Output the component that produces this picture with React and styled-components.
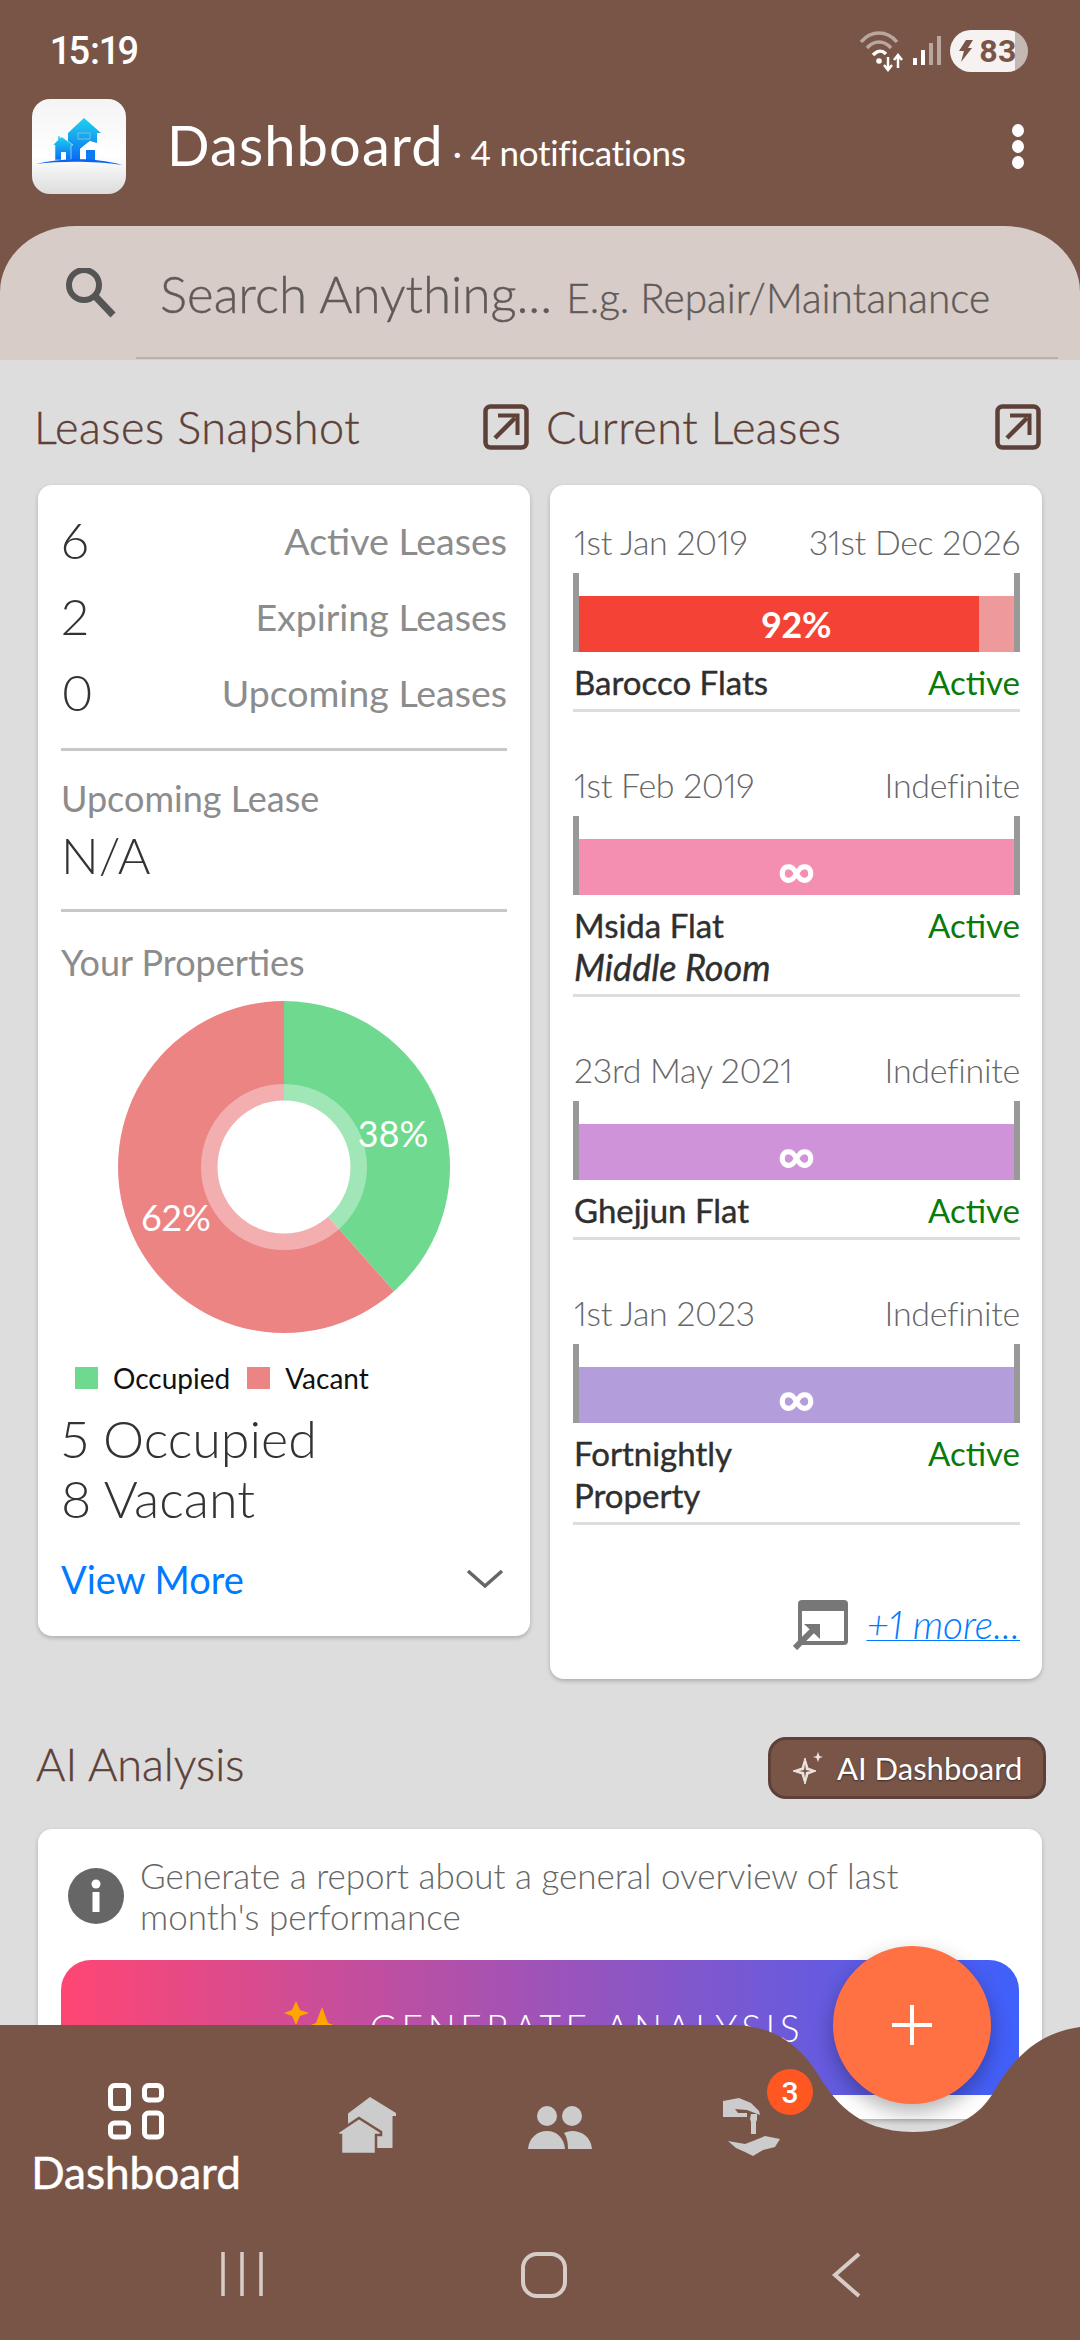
import styled, { createGlobalStyle } from "styled-components";

const GlobalStyle = createGlobalStyle`
	html, body {
		margin: 0;
		padding: 0;
		background: #dddddd;
	}
	* {
		box-sizing: border-box;
	}
`;

const FONT = `"Lato", "Liberation Sans", sans-serif`;
const BROWN = "#795548";

const Screen = styled.div`
	width: 1080px;
	height: 2340px;
	position: relative;
	overflow: hidden;
	background: #dddddd;
	font-family: ${FONT};
	font-weight: 300;
	font-variant-numeric: proportional-nums;
`;

const TopBar = styled.div`
	background: ${BROWN};
	height: 226px;
`;

const StatusRow = styled.div`
	height: 99px;
	padding: 3px 52px 0 51px;
	display: flex;
	justify-content: space-between;
	align-items: center;
`;

const Time = styled.div`
	font-family: Roboto, sans-serif;
	font-size: 38px;
	font-weight: 500;
	color: #fff;
`;

const StatusIcons = styled.div`
	display: flex;
	align-items: center;
	gap: 8px;
`;

const Battery = styled.div`
	width: 78px;
	height: 42px;
	border-radius: 21px;
	background: linear-gradient(to right, #f5f2f1 83%, #c5b8b2 83%);
	display: flex;
	align-items: center;
	gap: 6px;
	padding-left: 8px;
	color: ${BROWN};
	font-family: Roboto, sans-serif;
	font-size: 32px;
	font-weight: 700;
`;

const AppRow = styled.div`
	display: flex;
	align-items: center;
	height: 95px;
	padding: 0 56px 0 32px;
`;

const AppTitle = styled.div`
	flex: 1;
	margin-left: 41px;
	display: flex;
	align-items: baseline;
	color: #fff;
	padding-bottom: 4px;
`;

const AppName = styled.span`
	font-size: 56px;
	font-weight: 400;
	letter-spacing: 1.1px;
`;

const AppSub = styled.span`
	font-size: 35px;
	margin-left: 9px;
	font-weight: 400;
	letter-spacing: -0.3px;
`;

const Dots = styled.div`
	display: flex;
	flex-direction: column;
	gap: 3px;
	span {
		width: 12px;
		height: 13px;
		border-radius: 50%;
		background: #fff;
	}
`;

const SearchWrap = styled.div`
	background: ${BROWN};
`;

const SearchBox = styled.div`
	height: 134px;
	background: #d7ccc8;
	border-radius: 76px 76px 0 0 / 66px 66px 0 0;
	display: flex;
	align-items: center;
	padding-left: 64px;
	position: relative;
	&::after {
		content: "";
		position: absolute;
		left: 136px;
		right: 22px;
		bottom: 1px;
		height: 2px;
		background: #bcaea9;
	}
`;

const SearchText = styled.div`
	margin-left: 44px;
	display: flex;
	align-items: baseline;
	color: #5f5a58;
	-webkit-text-stroke: 0.4px #5f5a58;
`;

const SearchMain = styled.span`
	font-size: 51px;
`;

const SearchHint = styled.span`
	font-size: 40.5px;
	margin-left: 14px;
`;

const Columns = styled.div`
	display: grid;
	grid-template-columns: 492px 492px;
	gap: 20px;
	padding: 0 38px;
	align-items: start;
`;

const ColumnHead = styled.div`
	height: 125px;
	display: flex;
	align-items: center;
	justify-content: space-between;
	margin-left: -4px;
	padding: 8px 1px 0 0;
`;

const SectionTitle = styled.div`
	font-size: 45px;
	color: #5d4037;
	font-weight: 300;
	letter-spacing: 0.5px;
	-webkit-text-stroke: 0.4px #5d4037;
`;

const AiTitle = styled(SectionTitle)`
	padding-bottom: 9px;
	letter-spacing: 0;
`;

const Card = styled.div`
	background: #fff;
	border-radius: 14px;
	box-shadow: 0 2px 4px rgba(0, 0, 0, 0.22);
	padding: ${(props) => props.$pad};
`;

const StatRow = styled.div`
	height: 76px;
	display: flex;
	align-items: center;
	justify-content: space-between;
`;

const StatNum = styled.div`
	font-size: 50px;
	color: #333;
`;

const StatLabel = styled.div`
	font-size: 37.5px;
	color: #8c8c8c;
	font-weight: 400;
`;

const Divider = styled.div`
	height: 3px;
	background: #c8c8c8;
	margin-top: ${(props) => props.$top}px;
`;

const FieldLabel = styled.div`
	font-size: 36px;
	line-height: 50px;
	color: #8c8c8c;
	font-weight: 400;
	margin-top: ${(props) => props.$top}px;
`;

const FieldValue = styled.div`
	font-size: 50px;
	line-height: 64px;
	color: #333;
`;

const DonutBox = styled.div`
	display: flex;
	justify-content: center;
	margin-top: 14px;
`;

const DonutLabel = styled.text`
	font-family: ${FONT};
	font-size: 36px;
	font-weight: 400;
	fill: #fff;
	text-anchor: middle;
	dominant-baseline: central;
`;

const Legend = styled.div`
	display: flex;
	align-items: center;
	height: 30px;
	margin-top: 30px;
	padding-left: 14px;
`;

const Swatch = styled.span`
	width: 23px;
	height: 22px;
	background: ${(props) => props.$color};
	margin-right: 15px;
`;

const LegendText = styled.span`
	font-size: 28px;
	color: #111;
	font-weight: 400;
	margin-right: 17px;
`;

const Counts = styled.div`
	margin-top: 15px;
	font-size: 52px;
	line-height: 60px;
	color: #333;
`;

const MoreRow = styled.div`
	margin-top: 26px;
	height: 50px;
	display: flex;
	align-items: center;
	justify-content: space-between;
	padding-right: 3px;
`;

const MoreLink = styled.span`
	font-size: 38px;
	color: #007aff;
	font-weight: 400;
`;

const Lease = styled.div`
	margin-bottom: 47px;
`;

const LeaseDates = styled.div`
	height: 50px;
	display: flex;
	align-items: center;
	justify-content: space-between;
	font-size: 34px;
	color: #666;
	padding-left: 1px;
	letter-spacing: -0.3px;
`;

const Track = styled.div`
	margin-top: 7px;
	height: 79px;
	border-left: 6px solid #999;
	border-right: 6px solid #999;
	display: flex;
	align-items: flex-end;
	position: relative;
`;

const TrackFill = styled.div`
	height: 56px;
	background: ${(props) => props.$color};
`;

const TrackRest = styled.div`
	height: 56px;
	flex: 1;
	background: #ef9a9a;
`;

const TrackText = styled.div`
	position: absolute;
	left: 0;
	right: 0;
	bottom: 0;
	height: 56px;
	line-height: ${(props) => (props.$infinite ? 60 : 56)}px;
	text-align: center;
	color: #fff;
	font-size: ${(props) => (props.$infinite ? 52 : 36)}px;
	font-weight: 700;
`;

const LeaseFoot = styled.div`
	margin-top: 9px;
	padding-bottom: 6px;
	border-bottom: 3px solid #ddd;
	display: flex;
	justify-content: space-between;
	align-items: flex-start;
	line-height: 42px;
`;

const LeaseName = styled.div`
	color: #2f2f2f;
	font-size: 33px;
	font-weight: 400;
	padding-left: 1px;
	-webkit-text-stroke: 0.4px #2f2f2f;
	i {
		display: block;
		font-size: 36px;
	}
`;

const LeaseStatus = styled.div`
	color: #0a7a0a;
	font-size: 33px;
	font-weight: 400;
`;

const MoreLeases = styled.div`
	margin-top: 74px;
	height: 50px;
	display: flex;
	align-items: center;
	justify-content: flex-end;
	gap: 17px;
`;

const MoreAnchor = styled.span`
	font-size: 39px;
	font-style: italic;
	color: #007aff;
	text-decoration: underline;
	text-decoration-thickness: 1px;
`;

const AiSection = styled.div`
	padding: 0 38px;
	margin-top: 58px;
`;

const AiHead = styled.div`
	height: 62px;
	display: flex;
	align-items: center;
	justify-content: space-between;
	margin: 0 -4px 30px -2px;
`;

const AiButton = styled.div`
	width: 278px;
	height: 62px;
	background: ${BROWN};
	border: 3px solid #5d4037;
	border-radius: 18px;
	display: flex;
	align-items: center;
	gap: 14px;
	padding-left: 22px;
	color: #fff;
	font-size: 31px;
	font-weight: 400;
	text-shadow: 0 1px 2px rgba(0, 0, 0, 0.5);
`;

const InfoRow = styled.div`
	display: flex;
	align-items: center;
	gap: 15px;
	padding-left: 6px;
`;

const InfoText = styled.div`
	font-size: 35px;
	line-height: 41px;
	color: #666;
	white-space: nowrap;
`;

const GenerateButton = styled.div`
	margin-top: 23px;
	height: 135px;
	border-radius: 30px;
	background: linear-gradient(to right, #ff4673, #3f60fb);
	display: flex;
	align-items: center;
	justify-content: center;
	gap: 26px;
	color: #fff;
	font-size: 37px;
	letter-spacing: 4.6px;
	padding-left: 8px;
`;

const Fab = styled.div`
	position: absolute;
	left: 833px;
	top: 1946px;
	width: 158px;
	height: 158px;
	border-radius: 50%;
	background: #ff7043;
	box-shadow: 0 8px 20px rgba(0, 0, 0, 0.3);
	display: flex;
	align-items: center;
	justify-content: center;
`;

const BottomBar = styled.div`
	position: absolute;
	left: 0;
	bottom: 0;
	width: 1080px;
	height: 315px;
	background: ${BROWN};
	clip-path: path("M0 0 H733 C768 0 797 16 817 48 C832 72 855 107 913 107 C955 107 980 90 993 68 C1010 38 1035 8 1080 2 V315 H0 Z");
`;

const Tabs = styled.div`
	display: flex;
	height: 227px;
	padding-top: 58px;
	align-items: flex-start;
`;

const Tab = styled.div`
	width: ${(props) => (props.$active ? 272 : 192)}px;
	display: flex;
	flex-direction: column;
	align-items: center;
	padding-top: ${(props) => props.$top || 0}px;
	position: relative;
`;

const TabLabel = styled.div`
	font-size: 44px;
	font-weight: 400;
	color: #fff;
	line-height: 50px;
	margin-top: 7px;
	-webkit-text-stroke: 0.5px #fff;
`;

const Badge = styled.div`
	position: absolute;
	left: 111px;
	top: -14px;
	width: 46px;
	height: 46px;
	border-radius: 50%;
	background: #ff5722;
	color: #fff;
	font-family: Roboto, sans-serif;
	font-size: 30px;
	font-weight: 500;
	display: flex;
	align-items: center;
	justify-content: center;
`;

const SystemKeys = styled.div`
	display: grid;
	grid-template-columns: repeat(3, 302px);
	justify-content: center;
	justify-items: center;
	padding-left: 8px;
	svg {
		display: block;
	}
`;

const leases = [
	{ start: "1st Jan 2019", end: "31st Dec 2026", color: "#f44336", pct: 92, name: "Barocco Flats" },
	{ start: "1st Feb 2019", end: "Indefinite", color: "#f48fb1", name: "Msida Flat", room: "Middle Room" },
	{ start: "23rd May 2021", end: "Indefinite", color: "#ce93d8", name: "Ghejjun Flat" },
	{ start: "1st Jan 2023", end: "Indefinite", color: "#b39ddb", name: "Fortnightly", name2: "Property" },
];

function slice(from, to, r) {
	const a = (from * Math.PI) / 180;
	const b = (to * Math.PI) / 180;
	const large = to - from > 180 ? 1 : 0;
	const x1 = r + r * Math.sin(a);
	const y1 = r - r * Math.cos(a);
	const x2 = r + r * Math.sin(b);
	const y2 = r - r * Math.cos(b);
	return `M${r} ${r} L${x1} ${y1} A${r} ${r} 0 ${large} 1 ${x2} ${y2} Z`;
}

function WifiIcon() {
	return (
		<svg width="44" height="46" viewBox="0 0 44 46" fill="none">
			<path d="M1 14 C11 2 27 2 37 14" stroke="#b9a79f" strokeWidth="3.5" />
			<path d="M7 20 C14 12 24 12 31 20" stroke="#b9a79f" strokeWidth="3.5" />
			<path d="M13 27 C18 22 22 22 26 26" stroke="#fff" strokeWidth="3.5" />
			<circle cx="19" cy="33" r="2.8" fill="#fff" />
			<path d="M28 29 V41 M24 37 L28 42 L32 37" stroke="#fff" strokeWidth="2.5" />
			<path d="M38 40 V28 M34 32 L38 27 L42 32" stroke="#fff" strokeWidth="2.5" />
		</svg>
	);
}

function SignalIcon() {
	return (
		<svg width="30" height="30" viewBox="0 0 30 30">
			<rect x="1" y="22" width="4" height="7" fill="#fff" />
			<rect x="9" y="14" width="4" height="15" fill="#fff" />
			<rect x="17" y="7" width="4" height="22" fill="#b9a79f" />
			<rect x="25" y="0" width="4" height="29" fill="#b9a79f" />
		</svg>
	);
}

function Logo() {
	return (
		<svg width="94" height="95" viewBox="0 0 94 95">
			<defs>
				<linearGradient id="tile" x1="0" y1="0" x2="0" y2="1">
					<stop offset="0" stopColor="#f4f4f4" />
					<stop offset="0.6" stopColor="#ffffff" />
					<stop offset="1" stopColor="#dcdcdc" />
				</linearGradient>
				<linearGradient id="house" x1="0" y1="0" x2="0" y2="1">
					<stop offset="0" stopColor="#1fd4ee" />
					<stop offset="1" stopColor="#0a6cf2" />
				</linearGradient>
			</defs>
			<rect width="94" height="95" rx="18" fill="url(#tile)" />
			<path d="M52 19 L69 34 H65 V44 L58 42 L48 50 V61 H36 V41 L36 34 Z" fill="url(#house)" />
			<path d="M30 38 L41 46 H39 V61 H23 V46 H21 L26 41 V37 H28 V39 Z" fill="url(#house)" stroke="#d8eefb" strokeWidth="0.6" />
			<path d="M58 42 L73 52 L72 54 L68 51 V61 H50 V50 H48 Z" fill="#fff" />
			<rect x="54" y="51" width="9" height="10" fill="#0a7cf4" />
			<rect x="29" y="53" width="5" height="8" fill="#fff" />
			<rect x="46" y="34" width="12" height="6" fill="none" stroke="#6cb8e8" strokeWidth="1.2" />
			<path d="M4 65 C28 59 64 58 90 66 C64 62 28 62 4 65 Z" fill="#0a62ee" />
		</svg>
	);
}

function SearchIcon() {
	return (
		<svg width="52" height="50" viewBox="0 0 52 50" fill="none" stroke="#555" strokeWidth="6">
			<circle cx="20" cy="17" r="15" />
			<path d="M31 28 L49 47" strokeWidth="7" />
		</svg>
	);
}

function OpenIcon() {
	return (
		<svg width="46" height="46" viewBox="0 0 46 46" fill="none" stroke="#5d4037">
			<rect x="2.5" y="2.5" width="41" height="41" rx="5" strokeWidth="4.5" />
			<path d="M12 34 L32 14" strokeWidth="4.5" />
			<path d="M15 11.5 H34.5 V31" strokeWidth="4" />
		</svg>
	);
}

function Chevron() {
	return (
		<svg width="38" height="22" viewBox="0 0 38 22" fill="none" stroke="#666" strokeWidth="3.5">
			<path d="M2 3 L19 18 L36 3" />
		</svg>
	);
}

function WindowIcon() {
	return (
		<svg width="56" height="52" viewBox="0 0 56 52" fill="none">
			<rect x="5" y="2" width="50" height="45" rx="4" fill="#777" />
			<rect x="9" y="13" width="42" height="30" fill="#fff" />
			<path d="M2 50 L22 30" stroke="#777" strokeWidth="6" />
			<path d="M11 26 H27 V41 Z" fill="#777" />
		</svg>
	);
}

function Sparkle() {
	return (
		<svg width="30" height="32" viewBox="0 0 30 32" fill="#ece3df">
			<path d="M12 6 L15 16 L23 19 L15 22 L12 32 L9 22 L0 19 L9 16 Z" stroke="#ece3df" />
			<path d="M12 12 L13 18 L18 19 L13 20 L12 26 L11 20 L6 19 L11 18 Z" fill={BROWN} />
			<path d="M25 0 L26.5 4 L30 5 L26.5 6 L25 10 L23.5 6 L20 5 L23.5 4 Z" />
		</svg>
	);
}

function InfoIcon() {
	return (
		<svg width="58" height="58" viewBox="0 0 58 58">
			<circle cx="29" cy="29" r="28" fill="#666" />
			<circle cx="29" cy="17" r="4.5" fill="#fff" />
			<rect x="25.5" y="25" width="7" height="20" fill="#fff" />
		</svg>
	);
}

function GoldStars() {
	return (
		<svg width="60" height="60" viewBox="0 0 60 60" fill="#ffa500">
			<path d="M12 3 L16 12 L25 15 L16 18 L12 27 L8 18 L0 15 L8 12 Z" />
			<path d="M38 9 L44 25 L60 31 L44 37 L38 53 L32 37 L16 31 L32 25 Z" />
		</svg>
	);
}

function DashboardIcon() {
	return (
		<svg width="56" height="57" viewBox="0 0 56 57" fill="none" stroke="#fff" strokeWidth="5">
			<rect x="2.5" y="2.5" width="18" height="23" rx="4" />
			<rect x="2.5" y="40" width="18" height="14" rx="4" />
			<rect x="36.5" y="2.5" width="17" height="14.5" rx="4" />
			<rect x="36.5" y="30" width="17" height="24" rx="4" />
		</svg>
	);
}

function HousesIcon() {
	return (
		<svg width="60" height="58" viewBox="0 0 60 58">
			<path d="M32 0 L58 16 V19 H54.5 V51 H10 V16.5 Z" fill="#ccc" />
			<path d="M21 21 L43 35 V38 H38 V57 H3 V38 H0 V35 Z" fill="#ccc" stroke={BROWN} strokeWidth="2.5" />
		</svg>
	);
}

function PeopleIcon() {
	return (
		<svg width="64" height="44" viewBox="0 0 64 44" fill="#ccc">
			<circle cx="19" cy="11" r="10" />
			<circle cx="44" cy="11" r="10" />
			<path d="M40 44 C50 44 58 44 64 44 C63 32 54 26 44 26 C41 26 38 27 36 28 C39 32 40 38 40 44 Z" />
			<path d="M0 44 C1 33 9 26 19 26 C29 26 36 33 37 44 Z" />
		</svg>
	);
}

function HandIcon() {
	return (
		<svg width="58" height="58" viewBox="0 0 58 58" fill="#ccc">
			<path d="M0 3 L16 0 L28 5 L36 13 L37 17 L24 12 L12 11 L15 15 L24 15 L24 19 L0 19 Z" />
			<path d="M28 16 H34 V22 L33 24 V36 H28 V24 L27 21 Z" />
			<path d="M5 43 L22 46 L30 43 L42 38 L57 41 L52 49 L40 52 L30 58 L22 54 L13 50 Z" />
		</svg>
	);
}

function App() {
	const occupiedDeg = (5 / 13) * 360;
	return (
		<Screen>
			<GlobalStyle />
			<TopBar>
				<StatusRow>
					<Time>15:19</Time>
					<StatusIcons>
						<WifiIcon />
						<SignalIcon />
						<Battery>
							<svg width="15" height="22" viewBox="0 0 15 22" fill={BROWN}>
								<path d="M8 0 H15 L10 8 H14 L3 22 L6 11 H1 Z" />
							</svg>
							<span>83</span>
						</Battery>
					</StatusIcons>
				</StatusRow>
				<AppRow>
					<Logo />
					<AppTitle>
						<AppName>Dashboard</AppName>
						<AppSub>· 4 notifications</AppSub>
					</AppTitle>
					<Dots>
						<span />
						<span />
						<span />
					</Dots>
				</AppRow>
			</TopBar>
			<SearchWrap>
				<SearchBox>
					<SearchIcon />
					<SearchText>
						<SearchMain>Search Anything...</SearchMain>
						<SearchHint>E.g. Repair/Maintanance</SearchHint>
					</SearchText>
				</SearchBox>
			</SearchWrap>

			<Columns>
				<div>
					<ColumnHead>
						<SectionTitle>Leases Snapshot</SectionTitle>
						<OpenIcon />
					</ColumnHead>
					<Card $pad="17px 23px 32px">
						<StatRow>
							<StatNum>6</StatNum>
							<StatLabel>Active Leases</StatLabel>
						</StatRow>
						<StatRow>
							<StatNum>2</StatNum>
							<StatLabel>Expiring Leases</StatLabel>
						</StatRow>
						<StatRow>
							<StatNum>0</StatNum>
							<StatLabel>Upcoming Leases</StatLabel>
						</StatRow>
						<Divider $top={18} />
						<FieldLabel $top={22}>Upcoming Lease</FieldLabel>
						<FieldValue>N/A</FieldValue>
						<Divider $top={22} />
						<FieldLabel $top={25}>Your Properties</FieldLabel>
						<DonutBox>
							<svg width="332" height="332" viewBox="0 0 332 332">
								<path d={slice(0, occupiedDeg, 166)} fill="#6fd98f" />
								<path d={slice(occupiedDeg, 360, 166)} fill="#ed8484" />
								<circle cx="166" cy="166" r="83" fill="rgba(255,255,255,0.35)" />
								<circle cx="166" cy="166" r="66.5" fill="#fff" />
								<DonutLabel x="275" y="132">38%</DonutLabel>
								<DonutLabel x="58" y="216">62%</DonutLabel>
							</svg>
						</DonutBox>
						<Legend>
							<Swatch $color="#6fd98f" />
							<LegendText>Occupied</LegendText>
							<Swatch $color="#ed8484" />
							<LegendText>Vacant</LegendText>
						</Legend>
						<Counts>
							5 Occupied
							<br />8 Vacant
						</Counts>
						<MoreRow>
							<MoreLink>View More</MoreLink>
							<Chevron />
						</MoreRow>
					</Card>
				</div>

				<div>
					<ColumnHead>
						<SectionTitle>Current Leases</SectionTitle>
						<OpenIcon />
					</ColumnHead>
					<Card $pad="31px 22px 30px 23px">
						{leases.map((l) => (
							<Lease key={l.start}>
								<LeaseDates>
									<span>{l.start}</span>
									<span>{l.end}</span>
								</LeaseDates>
								<Track>
									<TrackFill $color={l.color} style={{ width: `${l.pct || 100}%` }} />
									{l.pct && <TrackRest />}
									<TrackText $infinite={!l.pct}>{l.pct ? `${l.pct}%` : "∞"}</TrackText>
								</Track>
								<LeaseFoot>
									<LeaseName>
										{l.name}
										{l.room && <i>{l.room}</i>}
										{l.name2 && <div>{l.name2}</div>}
									</LeaseName>
									<LeaseStatus>Active</LeaseStatus>
								</LeaseFoot>
							</Lease>
						))}
						<MoreLeases>
							<WindowIcon />
							<MoreAnchor>+1 more...</MoreAnchor>
						</MoreLeases>
					</Card>
				</div>
			</Columns>

			<AiSection>
				<AiHead>
					<AiTitle>AI Analysis</AiTitle>
					<AiButton>
						<Sparkle />
						AI Dashboard
					</AiButton>
				</AiHead>
				<Card $pad="26px 23px 24px">
					<InfoRow>
						<InfoIcon />
						<InfoText>
							Generate a report about a general overview of last
							<br />
							month's performance
						</InfoText>
					</InfoRow>
					<GenerateButton>
						<GoldStars />
						GENERATE ANALYSIS
					</GenerateButton>
				</Card>
			</AiSection>

			<Fab>
				<svg width="44" height="44" viewBox="0 0 44 44" stroke="#fff" strokeWidth="4">
					<path d="M22 2 V42 M2 22 H42" />
				</svg>
			</Fab>

			<BottomBar>
				<Tabs>
					<Tab $active>
						<DashboardIcon />
						<TabLabel>Dashboard</TabLabel>
					</Tab>
					<Tab $top={14}>
						<HousesIcon />
					</Tab>
					<Tab $top={22}>
						<PeopleIcon />
					</Tab>
					<Tab $top={15}>
						<HandIcon />
						<Badge>3</Badge>
					</Tab>
				</Tabs>
				<SystemKeys>
					<svg width="44" height="44" viewBox="0 0 44 44" stroke="#d7ccc8" strokeWidth="3.5">
						<path d="M3 0 V44 M22 0 V44 M41 0 V44" />
					</svg>
					<svg width="46" height="46" viewBox="0 0 46 46" fill="none" stroke="#d7ccc8" strokeWidth="4">
						<rect x="2" y="2" width="42" height="42" rx="14" />
					</svg>
					<svg width="30" height="46" viewBox="0 0 30 46" fill="none" stroke="#d7ccc8" strokeWidth="4">
						<path d="M28 2 L4 23 L28 44" />
					</svg>
				</SystemKeys>
			</BottomBar>
		</Screen>
	);
}

export default App;
